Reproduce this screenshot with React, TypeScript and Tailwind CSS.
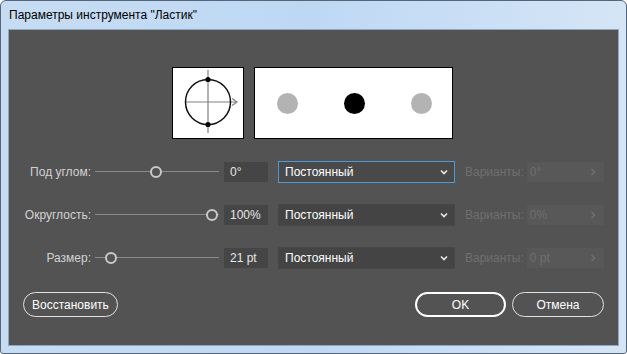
import React from 'react';

const font = { fontFamily: '"Liberation Sans", Arial, sans-serif' };

function Slider({ pos }: { pos: number }) {
  return (
    <div className="relative h-[21px] w-[124px] flex items-center">
      <div className="h-px w-full bg-[#8a8a8a]" />
      <div
        className="absolute top-1/2 h-[12px] w-[12px] -translate-x-1/2 -translate-y-1/2 rounded-full border-2 border-[#c9c9c9] bg-[#535353]"
        style={{ left: pos }}
      />
    </div>
  );
}

function Chevron({ color, d = 'M2 3.5 L5 6.5 L8 3.5' }: { color: string; d?: string }) {
  return (
    <svg width="10" height="10" viewBox="0 0 10 10">
      <path d={d} fill="none" stroke={color} strokeWidth="1.6" />
    </svg>
  );
}

function Row({
  label,
  pos,
  value,
  variant,
  focused,
}: {
  label: string;
  pos: number;
  value: string;
  variant: string;
  focused?: boolean;
}) {
  return (
    <div className="flex h-[21px] items-center">
      <div className="w-[82px] text-right text-[12px] text-[#d2d2d2]">{label}</div>
      <div className="ml-[4px]">
        <Slider pos={pos} />
      </div>
      <div className="ml-[5px] flex h-[20px] w-[44px] items-center bg-[#454545] pl-[6px] text-[12px] text-[#e6e6e6]">
        {value}
      </div>
      <div
        className={`ml-[10px] flex h-[22px] w-[177px] items-center justify-between pl-[6px] pr-[5px] text-[12px] text-white ${
          focused ? 'border border-[#4a9ad9] bg-[#494949]' : 'border border-[#474747] bg-[#444444]'
        }`}
      >
        <span>Постоянный</span>
        <Chevron color="#e8e8e8" />
      </div>
      <div className="ml-[10px] text-[12px] text-[#6f6f6f]">Варианты:</div>
      <div className="ml-[3px] flex h-[20px] w-[77px] items-center justify-between bg-[#585858] pl-[3px] pr-[6px] text-[12px] text-[#6f6f6f]">
        <span>{variant}</span>
        <Chevron color="#6f6f6f" d="M3.5 2 L6.5 5 L3.5 8" />
      </div>
    </div>
  );
}

export default function App() {
  return (
    <div
      className="flex h-[354px] w-[627px] flex-col overflow-hidden rounded-t-[6px] rounded-b-[3px] border border-[#55667a] bg-gradient-to-r from-[#c6dcf2] via-[#bed8f4] to-[#d5e5f6]"
      style={font}
    >
      <div className="flex h-[28px] items-center pl-[8px] text-[12px] text-black">
        Параметры инструмента "Ластик"
      </div>
      <div className="mx-[7px] mb-[7px] flex flex-1 flex-col border border-[#8ea6bf] bg-[#535353]">
        <div className="flex justify-center gap-[10px] pr-[2px] pt-[37px]">
          <div className="h-[72px] w-[72px] border border-black bg-white">
            <svg width="70" height="70" viewBox="0 0 70 70">
              <line x1="12" y1="34" x2="63" y2="34" stroke="#808080" strokeWidth="1.2" />
              <path d="M59 30.5 L64 34 L59 37.5" fill="none" stroke="#808080" strokeWidth="1.2" />
              <line x1="35" y1="2" x2="35" y2="65" stroke="#808080" strokeWidth="1.2" />
              <circle cx="35" cy="34" r="22.5" fill="none" stroke="#111" strokeWidth="1.5" />
              <circle cx="35" cy="11.5" r="2.6" fill="#000" />
              <circle cx="35" cy="56.5" r="2.6" fill="#000" />
            </svg>
          </div>
          <div className="flex h-[72px] w-[199px] items-center border border-black bg-white">
            <div className="ml-[22px] h-[21px] w-[21px] rounded-full bg-[#b3b3b3]" />
            <div className="ml-[46px] h-[21px] w-[21px] rounded-full bg-black" />
            <div className="ml-[46px] h-[21px] w-[21px] rounded-full bg-[#b3b3b3]" />
          </div>
        </div>

        <div className="mt-[22px] flex flex-col gap-[22px]">
          <Row label="Под углом:" pos={61} value="0°" variant="0°" focused />
          <Row label="Округлость:" pos={117} value="100%" variant="0%" />
          <Row label="Размер:" pos={16} value="21 pt" variant="0 pt" />
        </div>

        <div className="mt-[24px] flex items-center px-[14px]">
          <button className="h-[25px] rounded-full border-[1.5px] border-[#e2e2e2] px-[8px] text-[12px] text-white">
            Восстановить
          </button>
          <div className="flex-1" />
          <button className="h-[25px] w-[91px] rounded-full border-2 border-white text-[12px] text-white">
            OK
          </button>
          <button className="ml-[6px] h-[25px] w-[92px] rounded-full border-[1.5px] border-[#e2e2e2] text-[12px] text-white">
            Отмена
          </button>
        </div>
      </div>
    </div>
  );
}
